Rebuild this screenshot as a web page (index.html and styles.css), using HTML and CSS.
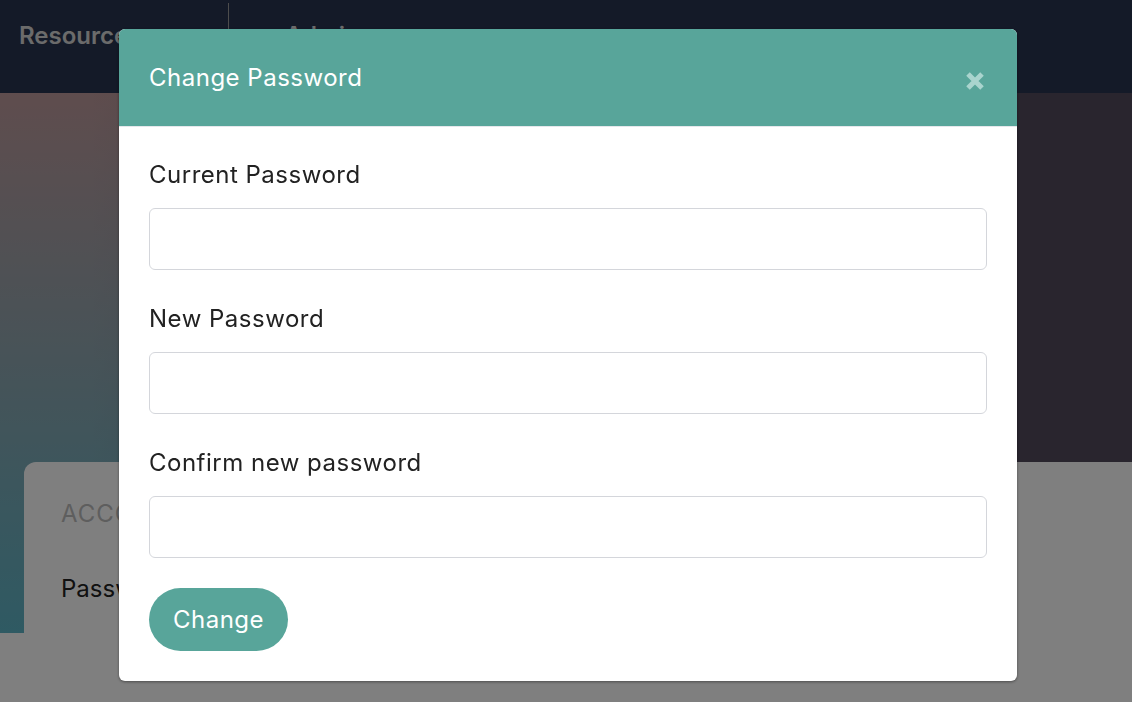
FILE: index.html
```html
<!DOCTYPE html>
<html lang="en">
<head>
<meta charset="utf-8">
<title>Change Password</title>
<link rel="stylesheet" href="styles.css">
</head>
<body>
<div class="page">
  <header class="nav">
    <a class="nav-item">Resources</a>
    <span class="nav-divider"></span>
    <a class="nav-item nav-admin">Admin</a>
  </header>
  <section class="hero"></section>
  <section class="card">
    <h2 class="card-title">ACCOUNT</h2>
    <div class="card-row">Password</div>
  </section>
</div>

<div class="backdrop">
  <div class="modal">
    <div class="modal-header">
      <h1 class="modal-title">Change Password</h1>
      <button class="close" aria-label="Close">
        <svg width="22" height="22" viewBox="0 0 22 22"><path d="M4 4 L18 18 M18 4 L4 18" stroke="#a9d4ce" stroke-width="5" stroke-linecap="butt"/></svg>
      </button>
    </div>
    <form class="modal-body">
      <div class="field">
        <label class="label">Current Password</label>
        <input class="input" type="password">
      </div>
      <div class="field">
        <label class="label">New Password</label>
        <input class="input" type="password">
      </div>
      <div class="field last">
        <label class="label">Confirm new password</label>
        <input class="input" type="password">
      </div>
      <button type="button" class="btn">Change</button>
    </form>
  </div>
</div>
</body>
</html>
```

FILE: styles.css
```css
* { box-sizing: border-box; }
html, body { margin: 0; padding: 0; }
body {
  font-family: Inter, "Liberation Sans", sans-serif;
  background: #fefefe;
  width: 1132px;
  height: 702px;
  overflow: hidden;
}
.page { position: relative; height: 702px; overflow: hidden; }
.nav {
  height: 93px;
  background: #283450;
  display: flex;
  align-items: flex-start;
  padding-left: 19px;
}
.nav-item {
  font-size: 24px;
  font-weight: 600;
  color: #d6d6d6;
  line-height: 30px;
  margin-top: 21px;
  width: 209px;
}
.nav-divider {
  width: 1px;
  height: 60px;
  margin-top: 3px;
  background: #9a9a9a;
}
.nav-admin { margin-left: 56px; color: #d6d6d6; }
.hero {
  height: 540px;
  background:
    linear-gradient(to right, rgba(82,74,92,0) 0%, rgba(82,74,92,0) 8%, rgba(82,74,92,1) 90%),
    linear-gradient(to bottom, #be9a9c 0%, #5eb4c6 100%);
}
.card {
  position: absolute;
  left: 24px;
  right: -24px;
  top: 462px;
  height: 240px;
  background: #fff;
  border-radius: 12px 0 0 0;
  padding: 38px 37px;
}
.card-title {
  margin: 0;
  font-size: 24px;
  font-weight: 400;
  letter-spacing: 1px;
  color: #bcbcbc;
  line-height: 28px;
}
.card-row {
  margin-top: 46px;
  font-size: 24px;
  color: #222;
  line-height: 30px;
}

.backdrop {
  position: fixed;
  inset: 0;
  background: rgba(0,0,0,0.5);
  padding: 29px 0 0 119px;
}
.modal {
  width: 898px;
  background: #fff;
  border-radius: 6px;
  overflow: hidden;
  box-shadow: 0 1px 3px rgba(0,0,0,0.4);
}
.modal-header {
  height: 98px;
  background: #58a59a;
  border-bottom: 1px solid #e5e7eb;
  display: flex;
  align-items: center;
  justify-content: space-between;
  padding: 0 30px 0 30px;
}
.modal-title {
  margin: 0;
  font-size: 24px;
  font-weight: 400;
  letter-spacing: 0.5px;
  color: #fff;
  line-height: 30px;
  margin-top: 1px;
}
.close {
  background: none;
  border: 0;
  padding: 0;
  width: 22px;
  height: 22px;
  margin-top: 7px;
  margin-right: 1px;
  cursor: pointer;
}
.close svg { display: block; }
.modal-body {
  padding: 33px 30px 30px;
  display: flex;
  flex-direction: column;
  align-items: flex-start;
}
.field {
  width: 100%;
  margin-bottom: 34px;
  display: flex;
  flex-direction: column;
}
.field.last { margin-bottom: 30px; }
.label {
  font-size: 24px;
  line-height: 30px;
  letter-spacing: 0.5px;
  color: #222;
  margin-bottom: 18px;
}
.input {
  height: 62px;
  width: 100%;
  border: 1px solid #d4d6db;
  border-radius: 6px;
  font-size: 20px;
  padding: 0 16px;
  outline: none;
}
.btn {
  height: 63px;
  width: 139px;
  border: 0;
  border-radius: 32px;
  background: #58a59a;
  color: #fff;
  font-family: Inter, "Liberation Sans", sans-serif;
  font-size: 24px;
  font-weight: 400;
  letter-spacing: 0.5px;
  cursor: pointer;
}
```
